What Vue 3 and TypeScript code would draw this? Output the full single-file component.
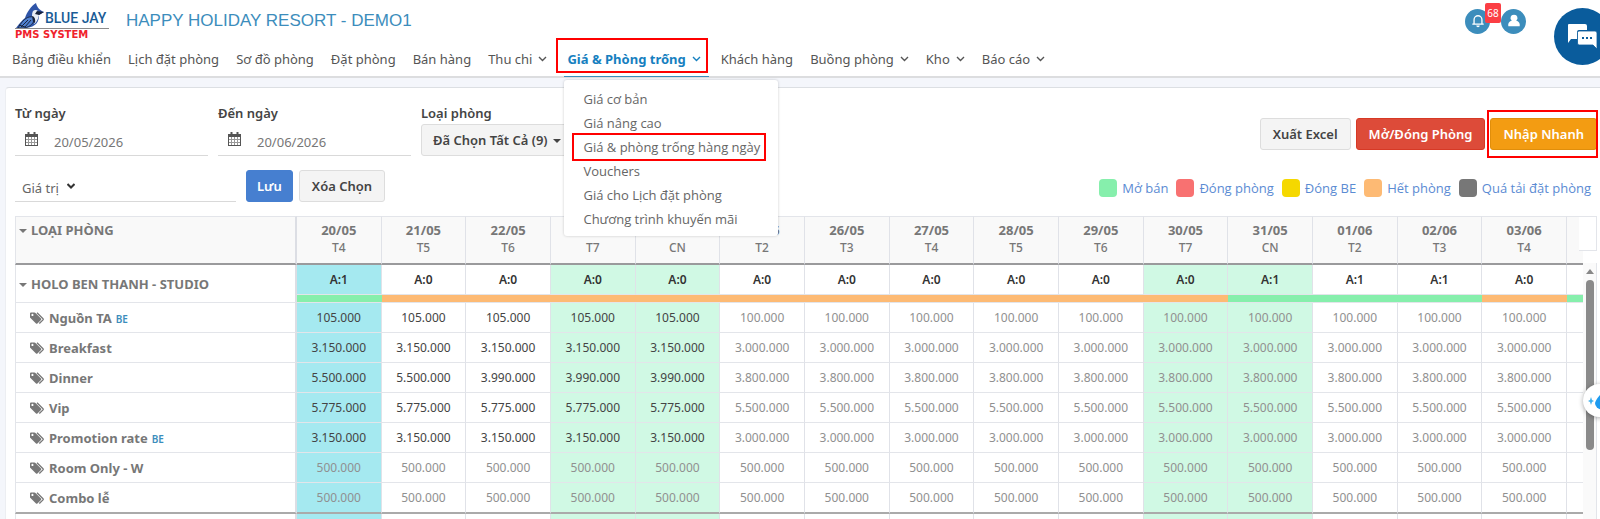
<script setup lang="ts">
import { ref } from 'vue'

interface NavItem { label: string; arrow?: boolean; active?: boolean }
interface Day { date: string; dow: string; avail: number; tone: string; bar: string }
interface Rate { name: string; be?: boolean; changed: string[]; base: string }

const nav: NavItem[] = [
  { label: 'Bảng điều khiển' },
  { label: 'Lịch đặt phòng' },
  { label: 'Sơ đồ phòng' },
  { label: 'Đặt phòng' },
  { label: 'Bán hàng' },
  { label: 'Thu chi', arrow: true },
  { label: 'Giá & Phòng trống', arrow: true, active: true },
  { label: 'Khách hàng' },
  { label: 'Buồng phòng', arrow: true },
  { label: 'Kho', arrow: true },
  { label: 'Báo cáo', arrow: true },
]

const submenu: string[] = [
  'Giá cơ bản',
  'Giá nâng cao',
  'Giá & phòng trống hàng ngày',
  'Vouchers',
  'Giá cho Lịch đặt phòng',
  'Chương trình khuyến mãi',
]

const legend = [
  { label: 'Mở bán', tone: 'open' },
  { label: 'Đóng phòng', tone: 'closed' },
  { label: 'Đóng BE', tone: 'be-closed' },
  { label: 'Hết phòng', tone: 'soldout' },
  { label: 'Quá tải đặt phòng', tone: 'overbooked' },
]

const days: Day[] = [
  { date: '20/05', dow: 'T4', avail: 1, tone: 'today', bar: 'open' },
  { date: '21/05', dow: 'T5', avail: 0, tone: '', bar: 'soldout' },
  { date: '22/05', dow: 'T6', avail: 0, tone: '', bar: 'soldout' },
  { date: '23/05', dow: 'T7', avail: 0, tone: 'weekend', bar: 'soldout' },
  { date: '24/05', dow: 'CN', avail: 0, tone: 'weekend', bar: 'soldout' },
  { date: '25/05', dow: 'T2', avail: 0, tone: '', bar: 'soldout' },
  { date: '26/05', dow: 'T3', avail: 0, tone: '', bar: 'soldout' },
  { date: '27/05', dow: 'T4', avail: 0, tone: '', bar: 'soldout' },
  { date: '28/05', dow: 'T5', avail: 0, tone: '', bar: 'soldout' },
  { date: '29/05', dow: 'T6', avail: 0, tone: '', bar: 'soldout' },
  { date: '30/05', dow: 'T7', avail: 0, tone: 'weekend', bar: 'soldout' },
  { date: '31/05', dow: 'CN', avail: 1, tone: 'weekend', bar: 'open' },
  { date: '01/06', dow: 'T2', avail: 1, tone: '', bar: 'open' },
  { date: '02/06', dow: 'T3', avail: 1, tone: '', bar: 'open' },
  { date: '03/06', dow: 'T4', avail: 0, tone: '', bar: 'soldout' },
]

const same = (v: string): string[] => [v, v, v, v, v]
const rates: Rate[] = [
  { name: 'Nguồn TA', be: true, changed: same('105.000'), base: '100.000' },
  { name: 'Breakfast', changed: same('3.150.000'), base: '3.000.000' },
  { name: 'Dinner', changed: ['5.500.000', '5.500.000', '3.990.000', '3.990.000', '3.990.000'], base: '3.800.000' },
  { name: 'Vip', changed: same('5.775.000'), base: '5.500.000' },
  { name: 'Promotion rate', be: true, changed: same('3.150.000'), base: '3.000.000' },
  { name: 'Room Only - W', changed: [], base: '500.000' },
  { name: 'Combo lễ', changed: [], base: '500.000' },
]

const fromDate = ref('20/05/2026')
const toDate = ref('20/06/2026')
</script>

<template>
  <div class="page">
    <header class="top">
      <div class="brand">
        <svg class="logo" viewBox="0 0 96 36" width="96" height="36" role="img" aria-label="Blue Jay PMS System">
          <path d="M1 25C5 20 7 17 10 15C12 9 16 3 21 0C22 4 24 7 29 9L24 12C24 18 22 24 10 25Z" fill="#2f55a8" />
          <path d="M3 25C9 15 13 13 19 14C20 20 15 24 9 25Z" fill="#4f80d0" stroke="#1c2c4d" />
          <path d="M20 7C23 7 24 9 24 12C23 17 21 20 19 21C20 17 18 15 17 13C17 9 18 7 20 7Z" fill="#e8edf5" />
          <path d="M22 8L29 9L24 12L20 11ZM17 13C19 13 21 16 20 20L18 19Z" fill="#18233d" />
          <path d="M6 24L13 17M10 24L16 17M4 22L10 24" stroke="#18233d" fill="none" />
          <path d="M0 25.500H94" stroke="#8b8b8b" />
          <text x="30" y="20" class="logo-name">BLUE JAY</text>
          <text x="0" y="35" class="logo-sub">PMS SYSTEM</text>
        </svg>
        <h1>HAPPY HOLIDAY RESORT - DEMO1</h1>
        <div class="user">
          <button class="round" type="button" aria-label="Thông báo">
            <svg viewBox="0 0 16 16" width="14" height="14"><path d="M3.500 11V6.500a4.500 4.500 0 0 1 9 0V11M1.500 11.500h13M8 2V1" fill="none" stroke="#fff" stroke-width="1.500" /><path d="M6 13h4a2 2 0 0 1-4 0" fill="#fff" /></svg>
            <span class="badge">68</span>
          </button>
          <button class="round" type="button" aria-label="Tài khoản">
            <svg viewBox="0 0 16 16" width="14" height="14"><path d="M8 1a3.600 3.600 0 0 1 2.500 6.500C14 8.500 15 11 14.500 14H1.500C1 11 2 8.500 5.500 7.500A3.600 3.600 0 0 1 8 1Z" fill="#fff" /></svg>
          </button>
        </div>
      </div>
      <nav class="nav">
        <div v-for="item in nav" :key="item.label" class="nav-item" :class="{ active: item.active }">
          <a href="#">{{ item.label }}<svg v-if="item.arrow" class="chev" viewBox="0 0 8 6" width="9" height="6"><path d="M0.500 1L4 4.500L7.500 1" fill="none" stroke="currentColor" stroke-width="1.400" /></svg></a>
          <ul v-if="item.active" class="submenu">
            <li v-for="(s, i) in submenu" :key="s" :class="{ marked: i === 2 }"><a href="#">{{ s }}</a></li>
          </ul>
        </div>
      </nav>
    </header>

    <main class="panel">
      <div class="tools">
        <div class="filters">
          <div class="field">
            <label for="from">Từ ngày</label>
            <div class="line">
              <svg class="cal" viewBox="0 0 13 14" width="13" height="14"><path d="M0 2h13v12H0ZM1 5v8h11V5Z" fill="#555" fill-rule="evenodd" /><path d="M3.500 0v4M9.500 0v4" stroke="#555" stroke-width="2" /><path d="M3.500 5v8M6.500 5v8M9.500 5v8M1 7.500h11M1 10.500h11" stroke="#999" /></svg>
              <input id="from" v-model="fromDate" type="text" />
            </div>
          </div>
          <div class="field">
            <label for="to">Đến ngày</label>
            <div class="line">
              <svg class="cal" viewBox="0 0 13 14" width="13" height="14"><path d="M0 2h13v12H0ZM1 5v8h11V5Z" fill="#555" fill-rule="evenodd" /><path d="M3.500 0v4M9.500 0v4" stroke="#555" stroke-width="2" /><path d="M3.500 5v8M6.500 5v8M9.500 5v8M1 7.500h11M1 10.500h11" stroke="#999" /></svg>
              <input id="to" v-model="toDate" type="text" />
            </div>
          </div>
          <div class="field">
            <label for="rooms">Loại phòng</label>
            <button id="rooms" class="btn picker" type="button">Đã Chọn Tất Cả (9)<span class="caret"></span></button>
          </div>
        </div>
        <div class="actions">
          <button class="btn" type="button">Xuất Excel</button>
          <button class="btn danger" type="button">Mở/Đóng Phòng</button>
          <span class="callout"><button class="btn warn" type="button">Nhập Nhanh</button></span>
        </div>
      </div>

      <div class="tools second">
        <div class="values">
          <div class="value-field">
            <select aria-label="Giá trị"><option>Giá trị</option></select>
            <svg class="value-chev" viewBox="0 0 8 6" width="8" height="6"><path d="M0.500 1L4 4.500L7.500 1" fill="none" stroke="#333" stroke-width="2" /></svg>
          </div>
          <button class="btn primary" type="button">Lưu</button>
          <button class="btn" type="button">Xóa Chọn</button>
        </div>
        <ul class="legend">
          <li v-for="l in legend" :key="l.label"><i :class="l.tone"></i><a href="#">{{ l.label }}</a></li>
        </ul>
      </div>

      <div class="board">
        <div class="sheet">
          <table>
            <colgroup>
              <col />
              <col v-for="d in days" :key="d.date" class="day-col" />
              <col class="rest-col" />
            </colgroup>
            <thead>
              <tr>
                <th class="name" scope="col"><span class="caret"></span>LOẠI PHÒNG</th>
                <th v-for="d in days" :key="d.date" scope="col">{{ d.date }}<small>{{ d.dow }}</small></th>
                <th></th>
              </tr>
            </thead>
            <tbody>
              <tr class="group">
                <th class="name" scope="row" rowspan="2"><span class="caret"></span>HOLO BEN THANH - STUDIO</th>
                <td v-for="d in days" :key="d.date" :class="d.tone">A:{{ d.avail }}</td>
                <td></td>
              </tr>
              <tr class="bars">
                <td v-for="d in days" :key="d.date" :class="d.bar"></td>
                <td class="open"></td>
              </tr>
              <tr v-for="r in rates" :key="r.name" class="rate">
                <th class="name" scope="row">
                  <svg class="tag" viewBox="0 0 14 12" width="14" height="12"><path d="M0 1.500V5.500L6 11.500Q6.700 12 7.400 11.500L11 8Q11.500 7.300 11 6.600L5.500 1L4.500 0.500H1Q0 0.500 0 1.500ZM2.500 1.800A1.100 1.100 0 1 1 2.400 1.800Z" fill="#777" fill-rule="evenodd" /><path d="M7 0.800L13 6.800Q13.500 7.300 13 7.900L9.300 11.500" fill="none" stroke="#777" stroke-width="1.300" /></svg>{{ r.name }}<em v-if="r.be">BE</em>
                </th>
                <td v-for="(d, i) in days" :key="d.date" :class="[d.tone, { base: !r.changed[i] }]">{{ r.changed[i] ?? r.base }}</td>
                <td></td>
              </tr>
              <tr class="next">
                <th class="name"></th>
                <td v-for="d in days" :key="d.date" :class="d.tone"></td>
                <td></td>
              </tr>
            </tbody>
          </table>
        </div>
        <div class="gutter">
          <div class="corner"></div>
          <div class="track">
            <span class="up"></span>
            <span class="thumb"></span>
          </div>
        </div>
      </div>
    </main>

    <button class="chat" type="button" aria-label="Trò chuyện">
      <svg viewBox="0 0 30 27" width="30" height="27"><path d="M2 1H18Q20 1 20 3V7H12Q10 7 10 9V16H4L1 20V2Q1 1 2 1Z" fill="#fff" /><path d="M12 8H28Q30 8 30 10V26L26 22H12Q10.500 22 10.500 20V9.500Q10.500 8 12 8Z" fill="#fff" stroke="#0a5c9c" stroke-width="0.800" /><path d="M15 15h2M19 15h2M23 15h2" stroke="#0a5c9c" stroke-width="2" /></svg>
    </button>
    <button class="drop" type="button" aria-label="Trợ lý">
      <svg viewBox="0 0 22 22" width="22" height="22"><path d="M4 7L5 10L7 11L5 12L4 15L3 12L1 11L3 10Z" fill="#3fb0ee" /><path d="M15 3Q21 11 21 13A5.500 5.500 0 0 1 8 13Q9 9 15 3Z" fill="#1d9bf0" /></svg>
    </button>
  </div>
</template>

<style>
body {
  background: #f4f6fb;
  overflow: hidden;
}
</style>

<style scoped>
.page {
  position: relative;
  height: 100vh;
  overflow: hidden;
  font-family: 'Noto Sans', 'Open Sans', sans-serif;
  font-size: 13px;
  color: #555;
}
* {
  box-sizing: border-box;
}
a {
  color: inherit;
  text-decoration: none;
}
ul {
  list-style: none;
  margin: 0;
  padding: 0;
}
button,
input,
select {
  font: inherit;
}
.top {
  background: #fff;
  border-bottom: 2px solid #dcdddf;
}
.brand {
  display: flex;
  align-items: center;
  height: 42px;
  padding-left: 15px;
}
.logo {
  overflow: visible;
}
.logo-name {
  font: 500 14px Roboto, 'Liberation Sans', sans-serif;
  fill: #1a5c96;
}
.logo-sub {
  font: bold 10px 'DejaVu Sans', sans-serif;
  fill: #f0222c;
}
h1 {
  margin: 0 0 0 15px;
  font: 17px 'Liberation Sans', Arial, sans-serif;
  color: #3c8dbc;
}
.user {
  display: flex;
  gap: 11px;
  margin-left: auto;
  padding-right: 74px;
}
.round {
  position: relative;
  display: grid;
  place-items: center;
  width: 25px;
  height: 25px;
  padding: 0;
  border: 0;
  border-radius: 50%;
  background: #3c8dbc;
}
.badge {
  position: absolute;
  left: 20px;
  top: -6px;
  width: 16px;
  height: 20px;
  line-height: 20px;
  font-size: 10px;
  color: #fff;
  background: #fb3e44;
  border-radius: 2px;
}
.nav {
  display: flex;
  gap: 17px;
  height: 34px;
  padding-left: 12px;
}
.nav-item {
  position: relative;
  line-height: 34px;
  white-space: nowrap;
}
.chev {
  margin-left: 6px;
  vertical-align: 2px;
}
.nav-item.active {
  margin: 0 3px;
  color: #1680bf;
  font-weight: bold;
}
.nav-item.active::before {
  content: '';
  position: absolute;
  inset: -4px -7px 3px -11px;
  border: 2px solid #f00;
}
.nav-item.active::after {
  content: '';
  position: absolute;
  left: -3px;
  right: -8px;
  bottom: -1px;
  height: 1px;
  background: #3c8dbc;
}
.submenu {
  position: absolute;
  z-index: 5;
  left: -3px;
  top: 38px;
  width: 214px;
  padding: 7px 10px 5px;
  background: #fff;
  border-radius: 3px;
  box-shadow: 0 0 3px #0003;
  font-family: 'Open Sans', 'Noto Sans', sans-serif;
  font-weight: normal;
  color: #666;
}
.submenu li {
  width: 190px;
  height: 24px;
  line-height: 24px;
  padding-left: 9px;
}
.submenu .marked {
  outline: 2px solid #f00;
}
.panel {
  margin: 9px 0 0 5px;
  padding: 15px 3px 0 9px;
  background: #fff;
  border-top: 1px solid #dcdfe3;
  border-left: 1px solid #eceef2;
  border-top-left-radius: 4px;
}
.tools {
  display: flex;
  justify-content: space-between;
  height: 53px;
}
.filters {
  display: flex;
  gap: 10px;
}
.field {
  width: 193px;
}
.field label {
  display: block;
  height: 21px;
  line-height: 20px;
  font-weight: 600;
  color: #444;
}
.line {
  display: flex;
  align-items: center;
  height: 32px;
  gap: 16px;
  padding-left: 10px;
  border-bottom: 1px solid #d9d9d9;
}
.cal {
  margin-bottom: 1px;
}
.line input {
  flex: 1;
  min-width: 0;
  border: 0;
  padding: 4px 0 0;
  background: none;
  color: #777;
}
.btn {
  height: 32px;
  padding: 0 12px;
  border: 1px solid #ddd;
  border-radius: 3px;
  background: #f4f4f4;
  color: #444;
  font-weight: 600;
  white-space: nowrap;
}
.caret {
  display: inline-block;
  border: 4px solid transparent;
  border-top-color: currentColor;
  border-bottom: 0;
  margin-left: 5px;
  vertical-align: 2px;
}
.picker {
  width: 100%;
  padding: 0 11px;
  text-align: left;
}
.actions {
  display: flex;
  align-items: flex-start;
  gap: 5px;
  padding-top: 15px;
}
.callout {
  position: relative;
}
.callout::after {
  content: '';
  position: absolute;
  inset: -8px -1px -8px -3px;
  border: 2px solid #f00;
}
.danger {
  background: #dd4b39;
  border-color: #d73925;
  color: #fff;
}
.warn {
  background: #f39c12;
  border-color: #e08e0b;
  color: #fff;
}
.primary {
  padding: 0 10px;
  background: #467fd0;
  border-color: #467fd0;
  color: #fff;
}
.second {
  height: 46px;
  padding-top: 14px;
}
.values {
  display: flex;
  gap: 6px;
}
.value-field {
  display: flex;
  align-items: center;
  width: 221px;
  height: 32px;
  margin-right: 4px;
  padding-left: 7px;
  border-bottom: 1px solid #d9d9d9;
}
.value-field select {
  appearance: none;
  border: 0;
  padding: 4px 0 0;
  background: none;
  color: #666;
}
.value-chev {
  margin-left: 8px;
}
.legend {
  display: flex;
  align-items: center;
  gap: 8px;
  height: 36px;
  padding-right: 6px;
  font-family: 'Open Sans', 'Noto Sans', sans-serif;
  color: #5b8bd3;
}
.legend li {
  display: flex;
  align-items: center;
  gap: 5px;
}
.legend i {
  width: 18px;
  height: 18px;
  border-radius: 4px;
}
.open {
  background: #86efac;
}
.closed {
  background: #f87171;
}
.be-closed {
  background: #f5d800;
}
.soldout {
  background: #fdba74;
}
.overbooked {
  background: #777;
}
.board {
  display: flex;
  margin-top: 14px;
}
.sheet {
  flex: 1;
  min-width: 0;
  overflow: hidden;
}
table {
  width: 100%;
  table-layout: fixed;
  border-collapse: separate;
  border-spacing: 0;
  color: #444;
}
.day-col {
  width: 5.4%;
}
.rest-col {
  width: 16px;
}
th,
td {
  padding: 0;
  border-right: 1px solid #e0e2e8;
  border-bottom: 1px solid #e3e5ea;
  text-align: center;
  overflow: hidden;
  white-space: nowrap;
}
th:last-child,
td:last-child {
  border-right: 0;
}
.name {
  border-left: 1px solid #e3e5ea;
  border-right: 2px solid #dcdee4;
  text-align: left;
  color: #777;
}
.name .caret {
  margin: 0 4px 0 3px;
}
thead th {
  height: 49px;
  padding-top: 4px;
  vertical-align: top;
  line-height: 19px;
  background: #f9f9f9;
  border-top: 1px solid #e3e5ea;
  border-bottom: 2px solid #9a9a9c;
  color: #777;
}
small {
  display: block;
  font-size: 12px;
  line-height: 16px;
  font-weight: 500;
}
.group td {
  height: 30px;
  font-size: 12px;
  font-weight: 600;
  color: #333;
}
.bars td {
  height: 8px;
  border-right: 0;
}
.rate th,
.rate td {
  height: 30px;
}
.rate td {
  font-size: 12px;
}
.base {
  color: #909090;
}
.rate:nth-last-child(2) th,
.rate:nth-last-child(2) td {
  height: 31px;
  border-bottom: 2px solid #aaa;
}
.next td,
.next th {
  height: 30px;
}
.today {
  background: #a5e9f0;
}
.weekend {
  background: #d0f9e4;
}
.tag {
  margin: 0 5px 0 14px;
  vertical-align: -1px;
}
em {
  margin-left: 4px;
  font-style: normal;
  font-weight: 600;
  font-size: 10px;
  color: #3c8dbc;
}
.gutter {
  width: 14px;
  display: flex;
  flex-direction: column;
}
.corner {
  height: 35px;
  margin-left: -4px;
  border: 1px solid #e3e5ea;
  border-left: 0;
  background: #fff;
  position: relative;
}
.track {
  flex: 1;
  display: flex;
  flex-direction: column;
  align-items: center;
  margin-top: 12px;
  background: #fafafa;
  border-right: 1px solid #e3e5ea;
}
.up {
  margin: 6px 0;
  border: 4px solid transparent;
  border-bottom: 5px solid #888;
  border-top: 0;
}
.thumb {
  width: 8px;
  height: 170px;
  border-radius: 4px;
  background: #8a8a8a;
}
.chat {
  position: absolute;
  right: -11px;
  top: 8px;
  width: 57px;
  height: 57px;
  padding: 0 0 0 13px;
  display: flex;
  align-items: center;
  border: 0;
  border-radius: 50%;
  background: #0a5c9c;
}
.drop {
  position: absolute;
  right: -16px;
  top: 384px;
  width: 33px;
  height: 33px;
  padding: 0 0 0 4px;
  display: flex;
  align-items: center;
  border: 0;
  border-radius: 50%;
  background: #fff;
  box-shadow: 0 1px 5px #0005;
}
</style>
